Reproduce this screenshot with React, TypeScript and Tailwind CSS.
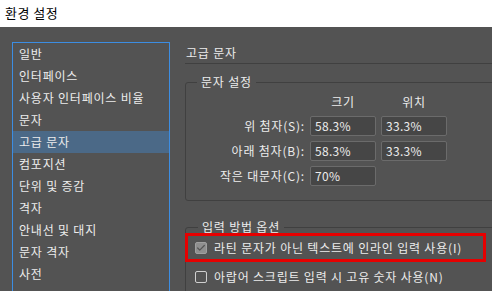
import { Check } from 'lucide-react';

const font = { fontFamily: '"Noto Sans CJK KR", "Noto Sans", sans-serif' };

const categories = [
  '일반',
  '인터페이스',
  '사용자 인터페이스 비율',
  '문자',
  '고급 문자',
  '컴포지션',
  '단위 및 증감',
  '격자',
  '안내선 및 대지',
  '문자 격자',
  '사전',
];

const rows = [
  { label: '위 첨자(S):', size: '58.3%', pos: '33.3%' },
  { label: '아래 첨자(B):', size: '58.3%', pos: '33.3%' },
  { label: '작은 대문자(C):', size: '70%' },
];

const Field = ({ value }: { value: string }) => (
  <div className="h-[20px] rounded-[2px] border border-[#6b6b6b] bg-[#464646] pl-[4px] text-[12px] leading-[18px] tracking-[0.3px] text-[#ececec]">
    {value}
  </div>
);

export default function App() {
  return (
    <div className="w-[492px] h-[291px] overflow-hidden flex flex-col bg-[#535353]" style={font}>
      <div className="h-[27px] shrink-0 bg-white pl-[5px] text-[13px] leading-[25px] tracking-[0.5px] text-black">환경 설정</div>

      <div className="flex flex-1 min-h-0">
        <div className="w-[170px] shrink-0 pl-[12px] pt-[15px]">
          <div className="h-[260px] w-[158px] border border-[#3c8de2]">
            {categories.map(name => (
              <div
                key={name}
                className={`h-[22px] pl-[6px] text-[12px] leading-[22px] tracking-[0.8px] text-[#ececec] ${name === '고급 문자' ? 'bg-[#4b6987]' : ''}`}
              >
                {name}
              </div>
            ))}
          </div>
        </div>

        <div className="flex-1 pl-[15px] text-[#ececec] text-[12px] tracking-[0.8px]">
          <div className="mt-[17px] w-[340px] border-b border-[#404040] pl-[1px] pb-[1px] leading-[18px]">고급 문자</div>

          <fieldset className="mt-[10px] w-[340px] rounded-[3px] border border-[#404040] pb-[14px]">
            <legend className="ml-[11px] px-[4px] leading-[16px]">문자 설정</legend>
            <div className="mt-[3px] grid grid-cols-[119px_66px_66px] gap-x-[5px] gap-y-[5px] items-center">
              <div />
              <div className="text-center leading-[18px]">크기</div>
              <div className="text-center leading-[18px]">위치</div>
              {rows.map(row => (
                <div key={row.label} className="contents">
                  <div className="text-right">{row.label}</div>
                  <Field value={row.size} />
                  {row.pos ? <Field value={row.pos} /> : <div />}
                </div>
              ))}
            </div>
          </fieldset>

          <fieldset className="mt-[18px] w-[340px] rounded-[3px] border border-[#404040] pb-[10px]">
            <legend className="ml-[12px] px-[4px] leading-[16px]">입력 방법 옵션</legend>
            <div className="-ml-[1px] -mt-[2px] flex h-[29px] w-[301px] items-center gap-[7px] border-[3px] border-[#e60000] pl-[7px]">
              <span className="flex h-[12px] w-[12px] items-center justify-center rounded-[2px] border border-[#a0a0a0] bg-[#8f8f8f]">
                <Check className="h-[10px] w-[10px] text-[#555555]" strokeWidth={3} />
              </span>
              <span>라틴 문자가 아닌 텍스트에 인라인 입력 사용(I)</span>
            </div>
            <div className="flex h-[29px] items-center gap-[7px] pl-[9px]">
              <span className="h-[12px] w-[12px] rounded-[2px] border border-[#cfcfcf]" />
              <span>아랍어 스크립트 입력 시 고유 숫자 사용(N)</span>
            </div>
          </fieldset>
        </div>
      </div>
    </div>
  );
}
